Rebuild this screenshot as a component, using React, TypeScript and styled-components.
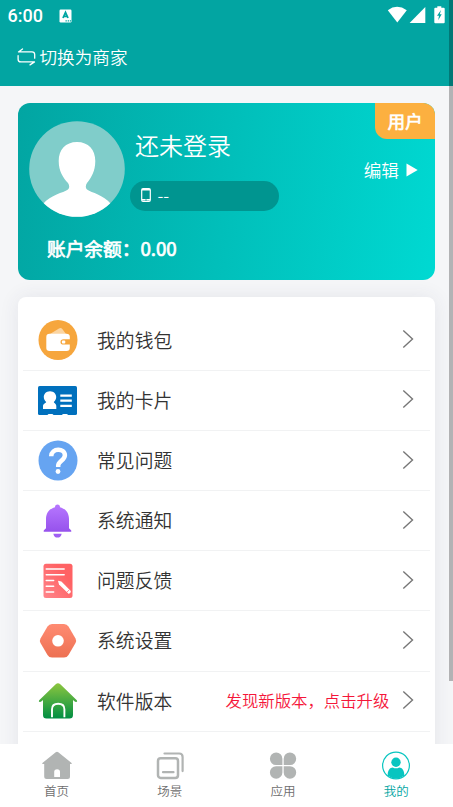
import React from "react";
import styled, { createGlobalStyle, css } from "styled-components";

const GlobalStyle = createGlobalStyle`
  * { box-sizing: border-box; }
  html, body { margin: 0; height: 807px; overflow: hidden; background: #f5f6f8; }
  body { font-family: "Noto Sans CJK SC", sans-serif; font-weight: 350; color: #333; }
  svg { display: block; flex: none; }
`;

const Screen = styled.div`
  position: relative;
  display: flex;
  flex-direction: column;
  width: 453px;
  height: 807px;
  overflow: hidden;
  background: #f5f6f8;
`;

const Header = styled.header`
  flex: none;
  height: 85.5px;
  background: #02a5a2;
  color: #fff;
`;

const StatusBar = styled.div`
  display: flex;
  align-items: center;
  height: 31px;
  padding-left: 7.5px;
`;

const Clock = styled.span`
  width: 51.5px;
  font-family: Roboto, sans-serif;
  font-size: 18px;
  font-weight: 500;
  line-height: 31px;
`;

const StatusIcons = styled.div`
  display: flex;
  margin-left: auto;
  margin-top: -1px;
`;

const SwitchRole = styled.div`
  display: flex;
  align-items: center;
  gap: 4px;
  height: 51px;
  padding-left: 16.5px;
  font-size: 17.6px;
  line-height: 26px;
`;

const Content = styled.main`
  flex: 1;
  min-height: 0;
  overflow: hidden;
  padding: 17.7px 17.6px 0 17.6px;
`;

const ProfileCard = styled.section`
  position: relative;
  height: 176.5px;
  padding: 18px 0 0 11.4px;
  border-radius: 12px;
  background: linear-gradient(98deg, #02a5a2 0%, #00d9d2 100%);
  color: #fff;
`;

const ProfileTop = styled.div`
  display: flex;
  height: 96px;
`;

const Identity = styled.div`
  display: flex;
  flex-direction: column;
  margin-left: 5px;
`;

const Name = styled.div`
  height: 50px;
  padding-left: 5px;
  font-size: 24px;
  line-height: 48px;
`;

const PhonePill = styled.div`
  display: flex;
  align-items: center;
  gap: 6px;
  width: 149.5px;
  height: 30px;
  margin-top: 9.5px;
  padding: 0 0 2px 11.5px;
  border-radius: 15px;
  background: #009590;
  font-size: 17px;
  line-height: 26px;
`;

const EditLink = styled.div`
  display: flex;
  align-items: center;
  gap: 7px;
  height: 26px;
  margin: 35.5px 17.5px 0 auto;
  font-size: 17.6px;
  line-height: 25px;
`;

const Balance = styled.div`
  margin: 16.5px 0 0 18px;
  font-size: 18.7px;
  font-weight: 400;
  -webkit-text-stroke: 0.7px currentColor;
  line-height: 28px;
`;

const RoleBadge = styled.div`
  position: absolute;
  top: 0;
  right: 0;
  width: 60.5px;
  height: 35.5px;
  border-radius: 0 12px 0 12px;
  background: #fcb040;
  font-size: 17.3px;
  font-weight: 400;
  -webkit-text-stroke: 0.7px currentColor;
  line-height: 35.5px;
  text-align: center;
`;

const Menu = styled.ul`
  list-style: none;
  height: 500px;
  margin: 17.7px 0 0;
  padding: 13.3px 5px 0;
  border-radius: 8px;
  background: #fff;
  box-shadow: 0 0 20px rgba(50, 60, 90, 0.09);
`;

const MenuRow = styled.li`
  display: flex;
  align-items: center;
  height: 60.15px;
  padding: 0 16px 0 15px;
  border-bottom: 1px solid #f1f2f3;
`;

const MenuIcon = styled.span`
  display: flex;
  align-items: center;
  justify-content: center;
  width: 40px;
  height: 42px;
  margin-right: 19.5px;
`;

const MenuLabel = styled.span`
  padding-bottom: 1px;
  font-size: 18.8px;
  line-height: 28px;
`;

const Notice = styled.span`
  margin-left: auto;
  padding-bottom: 1.5px;
  color: #f5163a;
  font-size: 16.4px;
`;

const ChevronBox = styled.span<{ $afterNotice: boolean }>`
  margin-top: -2px;
  margin-left: ${(p) => (p.$afterNotice ? "13px" : "auto")};
`;

const TabBar = styled.nav`
  display: grid;
  grid-template-columns: repeat(4, 1fr);
  flex: none;
  height: 63.5px;
  background: #fff;
`;

const Tab = styled.div<{ $active: boolean }>`
  display: flex;
  flex-direction: column;
  align-items: center;
  padding-top: 6.5px;
  color: #6e6e6e;
  font-size: 12.5px;
  line-height: 18px;
  ${(p) => p.$active && css`color: #02a5a2;`}
  svg { margin-bottom: 0.5px; }
`;

const ScrollThumb = styled.div`
  position: absolute;
  top: 0;
  right: 0;
  width: 4px;
  height: 681px;
  background: rgba(0, 0, 0, 0.27);
`;

const KeyboardIcon = () => (
  <svg width="13" height="14" viewBox="0 0 13 14">
    <rect x="0.5" y="0.5" width="12" height="13" rx="1.2" fill="#fff" />
    <path d="M4 9 6.500 3.500 9 9M5 7.300h3" fill="none" stroke="#02a5a2" strokeWidth="1.8" />
    <path d="M6.500 11.900h1.300M8.700 11.900H10M10.800 11.900H12" stroke="#02a5a2" strokeWidth="1.1" />
  </svg>
);

const SignalIcons = () => (
  <svg width="66" height="20" viewBox="0 0 66 20" fill="#fff">
    <path d="M.8 5.300Q9.900-1.600 19.800 5.300L10.300 17.500Z" />
    <path d="M22.600 17.900 38.300 2v15.900Z" />
    <path d="M50.300 1.200h4v1.500h2.400q1 0 1 1v13.500q0 1-1 1h-8.400q-1 0-1-1v-13.500q0-1 1-1h2Z" />
    <path d="m54 5-4 5.700h2l-.8 4.600 3.500-6h-1.900Z" fill="#02a5a2" />
  </svg>
);

const SwapIcon = () => (
  <svg width="19" height="18" viewBox="0 0 19 18" fill="none" stroke="#fff" strokeWidth="1.300" strokeLinecap="round" strokeLinejoin="round">
    <path d="M5.500.9 1.500 3.900H15q2.700 0 2.700 2.700v3.600" />
    <path d="M1.100 7.600v3.600q0 2.700 2.700 2.700h13.700L13 16.900" />
  </svg>
);

const Avatar = () => (
  <svg width="96" height="96" viewBox="0 0 96 96">
    <defs>
      <clipPath id="avatar-clip"><circle cx="48" cy="48" r="47.8" /></clipPath>
    </defs>
    <g clipPath="url(#avatar-clip)">
      <rect width="96" height="96" fill="#80cdca" />
      <path fill="#fff" d="M48 21c11.500 0 18.300 7.800 18.300 19 0 10-4 16.500-8.300 22-1.500 2-1.700 5 0 6.500C63 72 74 73.500 82 83v14H14V83c8-9.500 20-11 25-14.500 1.700-1.500 1.500-4.500 0-6.500-5-5.500-9.300-12-9.300-22 0-11.200 6.800-19 18.300-19Z" />
    </g>
  </svg>
);

const PhoneIcon = () => (
  <svg width="10" height="14" viewBox="0 0 10 14">
    <rect x="0.7" y="0.7" width="8.6" height="12.6" rx="1.3" fill="none" stroke="#fff" strokeWidth="1.2" />
    <path d="M1 1.700h8M1 11.800h8" stroke="#fff" strokeWidth="1.6" />
    <circle cx="5" cy="12" r=".7" fill="#009590" />
  </svg>
);

const Chevron = () => (
  <svg width="12" height="20" viewBox="0 0 12 20" fill="none" stroke="#777" strokeWidth="1.4">
    <path d="m1.300 1.600 9.200 8.400-9.200 8.400" />
  </svg>
);

const WalletIcon = () => (
  <svg width="40" height="41" viewBox="0 0 40 41">
    <ellipse cx="20" cy="20" rx="19.5" ry="20" fill="#f6a63d" />
    <path d="m12 14 9-5.600q2-1.200 3.300.6l3.700 5Z" fill="#fbd5a2" />
    <rect x="8.300" y="13.800" width="23.500" height="17.200" rx="3.300" fill="#fff" />
    <path d="M32 19.300h-6.500q-3 0-3 2.600t3 2.700H32Z" fill="#f6a63d" />
    <rect x="23.900" y="20.500" width="3.400" height="2.900" rx="1" fill="#fff" />
  </svg>
);

const CardIcon = () => (
  <svg width="39" height="29" viewBox="0 0 39 29">
    <rect width="39" height="29" rx="1.600" fill="#0070bd" />
    <path fill="#fff" d="M12 5.200c4 0 6.200 2.800 6.200 5.900 0 2.200-1 3.700-2.400 4.900 0 1 2.500 1.500 2.500 4v3H5v-3c0-2.500 3.200-3 3.200-4-1.400-1.200-2.400-2.700-2.400-4.900 0-3.100 2.200-5.900 6.200-5.900Z" />
    <path d="M22.300 9.600h11.500M22.300 14.700h11.500M22.300 19.900h11.500" stroke="#fff" strokeWidth="2.2" />
    <path d="M9.500 29q.4-1 1.500-1h3q1 0 1.500 1Zm14.500 0q.4-1 1.500-1h3q1 0 1.500 1Z" fill="#fff" />
  </svg>
);

const QuestionIcon = () => (
  <svg width="40" height="41" viewBox="0 0 40 41">
    <ellipse cx="20" cy="20.500" rx="19.5" ry="20" fill="#66a4f1" />
    <path d="M13.200 16.200c.2-8.600 13.700-8.600 13.700-.9 0 5-6.700 5.700-6.700 10.200v1.500" fill="none" stroke="#fff" strokeWidth="4.500" />
    <circle cx="20" cy="31.500" r="2.400" fill="#fff" />
  </svg>
);

const BellIcon = () => (
  <svg width="29" height="34" viewBox="0 0 29 34">
    <defs>
      <linearGradient id="bell" x2="0" y2="1"><stop stopColor="#b777ff" /><stop offset="1" stopColor="#9652ec" /></linearGradient>
    </defs>
    <path fill="url(#bell)" d="M14.500.5c1.600 0 2.500 1 2.500 2.700 5.800 1.500 9 6 9 11.700v9.300l1.800 1.800q.8.800.4 1.700H.8q-.5-.9.4-1.700L3 24.200v-9.300C3 9.200 6.200 4.700 12 3.200 12 1.500 12.900.5 14.500.5Z" />
    <path d="M10.300 29.700h8.400c-.6 2.500-2 3.900-4.200 3.900s-3.600-1.400-4.200-3.900Z" fill="#a060f3" />
  </svg>
);

const FeedbackIcon = () => (
  <svg width="30" height="36" viewBox="0 0 30 36">
    <defs>
      <linearGradient id="note" x1="0" y1="1" x2="1" y2="0"><stop stopColor="#ff858b" /><stop offset=".7" stopColor="#ff6264" /></linearGradient>
    </defs>
    <rect x=".5" y=".8" width="29" height="34.200" rx="2.500" fill="url(#note)" />
    <path d="M3.200 6h18M3.200 11.800h18M3.200 17.500h7.500M3.200 23.200h7.500M3.200 29h7.500" stroke="#fff" strokeWidth="1.400" strokeLinecap="round" />
    <path d="M15 17.700l3.400.9 9.400 9.400q.6 1.600-2 3L16 21.400Z" fill="#fff" />
    <path d="m23.700 29.400 2.500-2.500" stroke="#ff6f73" strokeWidth=".8" />
  </svg>
);

const SettingsIcon = () => (
  <svg width="38" height="36" viewBox="0 0 38 36">
    <defs>
      <linearGradient id="hex" x2="0" y2="1"><stop stopColor="#ff8b72" /><stop offset="1" stopColor="#ed7052" /></linearGradient>
    </defs>
    <path fill="url(#hex)" d="M13 1h12q3 0 4.500 2.500l7 12q1.300 2.300 0 4.600l-7 12Q28 34.600 25 34.600H13q-3 0-4.500-2.500l-7-12Q.2 17.800 1.500 15.500l7-12Q10 1 13 1Z" />
    <circle cx="19" cy="17.800" r="5.800" fill="#fff" />
  </svg>
);

const VersionIcon = () => (
  <svg width="40" height="38" viewBox="0 0 40 38">
    <defs>
      <linearGradient id="house" x2="0" y2="1"><stop stopColor="#8dc63f" /><stop offset="1" stopColor="#008e43" /></linearGradient>
    </defs>
    <path fill="url(#house)" d="M17.700 2.300q2.300-2.200 4.600 0l16.500 16q1 1.200-.4 1.700-1 .2-2-.7L35 18v15q0 3.500-3.500 3.500h-23Q5 36.500 5 33V18l-1.400 1.300q-1 .9-2 .7-1.400-.5-.4-1.700Z" />
    <path d="M14 35.300v-8q0-5.500 6.200-5.500t6.200 5.500v8" fill="none" stroke="#fff" strokeWidth="1.900" />
  </svg>
);

const HomeTabIcon = () => (
  <svg width="32" height="31" viewBox="0 0 32 31">
    <path fill="#b1b4b3" d="M14.700 2.300q1.300-1.100 2.600 0L30.600 13q.7.900-.5 1H29v12.500q0 2.500-2.500 2.500H5.700q-2.500 0-2.500-2.500V14H1.900q-1.200-.1-.5-1Z" />
    <path fill="#fff" d="M13.200 27v-5q0-2.700 2.900-2.700t2.900 2.700v5Z" />
  </svg>
);

const SceneTabIcon = () => (
  <svg width="32" height="31" viewBox="0 0 32 31" fill="none" stroke="#b1b4b3">
    <rect x="4" y="8.300" width="20" height="19.600" rx="2.700" strokeWidth="2.500" />
    <path d="M10.500 3.500h14.700q3.400 0 3.400 3.400v14.200M9 22.200h10.500" strokeWidth="2.200" strokeLinecap="round" />
  </svg>
);

const AppsTabIcon = () => (
  <svg width="32" height="31" viewBox="0 0 32 31" fill="#b1b4b3">
    <path d="M15.400 15H9.100A6.250 6.250 0 1 1 15.400 8.800ZM16.700 15H23A6.250 6.250 0 1 0 16.700 8.800ZM15.400 16.200H9.100A6.250 6.250 0 1 0 15.400 22.400ZM16.700 16.200H23A6.250 6.250 0 1 1 16.700 22.400Z" />
  </svg>
);

const MineTabIcon = () => (
  <svg width="32" height="31" viewBox="0 0 32 31">
    <circle cx="16" cy="15.500" r="13.400" fill="none" stroke="#08c5c0" strokeWidth="1.200" />
    <path d="M7.800 25.800c-.5-5 2-8.300 5-8.300q3.200 1.700 6.400 0c3 0 5.500 3.300 5 8.300q-8.200 5.500-16.400 0Z" fill="#08c5c0" />
    <circle cx="16" cy="12.200" r="4.700" fill="#08c5c0" />
  </svg>
);

const EditArrow = () => (
  <svg width="12" height="14" viewBox="0 0 12 14">
    <path d="M.5.600 11.700 7 .5 13.400Z" fill="#fff" />
  </svg>
);

const menuItems = [
  { label: "我的钱包", Icon: WalletIcon },
  { label: "我的卡片", Icon: CardIcon },
  { label: "常见问题", Icon: QuestionIcon },
  { label: "系统通知", Icon: BellIcon },
  { label: "问题反馈", Icon: FeedbackIcon },
  { label: "系统设置", Icon: SettingsIcon },
  { label: "软件版本", Icon: VersionIcon, notice: "发现新版本，点击升级" },
];

const tabs = [
  { label: "首页", Icon: HomeTabIcon },
  { label: "场景", Icon: SceneTabIcon },
  { label: "应用", Icon: AppsTabIcon },
  { label: "我的", Icon: MineTabIcon, active: true },
];

export default function App() {
  return (
    <Screen lang="zh-CN">
      <GlobalStyle />
      <Header>
        <StatusBar>
          <Clock>6:00</Clock>
          <KeyboardIcon />
          <StatusIcons><SignalIcons /></StatusIcons>
        </StatusBar>
        <SwitchRole><SwapIcon />切换为商家</SwitchRole>
      </Header>
      <Content>
        <ProfileCard>
          <ProfileTop>
            <Avatar />
            <Identity>
              <Name>还未登录</Name>
              <PhonePill><PhoneIcon />--</PhonePill>
            </Identity>
            <EditLink>编辑<EditArrow /></EditLink>
          </ProfileTop>
          <Balance>账户余额：0.00</Balance>
          <RoleBadge>用户</RoleBadge>
        </ProfileCard>
        <Menu>
          {menuItems.map(({ label, Icon, notice }) => (
            <MenuRow key={label}>
              <MenuIcon><Icon /></MenuIcon>
              <MenuLabel>{label}</MenuLabel>
              {notice && <Notice>{notice}</Notice>}
              <ChevronBox $afterNotice={Boolean(notice)}><Chevron /></ChevronBox>
            </MenuRow>
          ))}
        </Menu>
      </Content>
      <TabBar>
        {tabs.map(({ label, Icon, active }) => (
          <Tab key={label} $active={Boolean(active)}>
            <Icon />
            {label}
          </Tab>
        ))}
      </TabBar>
      <ScrollThumb />
    </Screen>
  );
}
